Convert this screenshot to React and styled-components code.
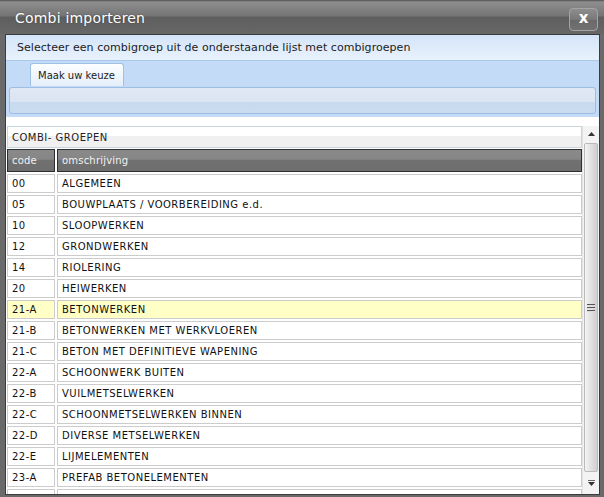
import React from 'react';
import styled, { createGlobalStyle } from 'styled-components';

const GlobalStyle = createGlobalStyle`
    html, body {
        margin: 0;
        padding: 0;
        overflow: hidden;
        background: #6a6a6a;
    }
    body {
        font-family: "DejaVu Sans", Verdana, sans-serif;
        font-size: 10px;
    }
`;

const groups = [
    ['00', 'ALGEMEEN'],
    ['05', 'BOUWPLAATS / VOORBEREIDING e.d.'],
    ['10', 'SLOOPWERKEN'],
    ['12', 'GRONDWERKEN'],
    ['14', 'RIOLERING'],
    ['20', 'HEIWERKEN'],
    ['21-A', 'BETONWERKEN'],
    ['21-B', 'BETONWERKEN MET WERKVLOEREN'],
    ['21-C', 'BETON MET DEFINITIEVE WAPENING'],
    ['22-A', 'SCHOONWERK BUITEN'],
    ['22-B', 'VUILMETSELWERKEN'],
    ['22-C', 'SCHOONMETSELWERKEN BINNEN'],
    ['22-D', 'DIVERSE METSELWERKEN'],
    ['22-E', 'LIJMELEMENTEN'],
    ['23-A', 'PREFAB BETONELEMENTEN'],
    ['24', 'BUITEN TRAPPEN EN HEKKEN']
];

const Window = styled.div`
    width: 604px;
    height: 497px;
    display: flex;
    flex-direction: column;
    background: #6a6a6a;
    overflow: hidden;
`;

const TitleBar = styled.div`
    height: 34px;
    flex-shrink: 0;
    display: flex;
    align-items: center;
    justify-content: space-between;
    padding: 0 6px 0 15px;
    box-sizing: border-box;
    background: linear-gradient(#505050 0, #8e8e8e 2px, #747474 16px, #5e5e5e 17px, #676767 34px);
`;

const Title = styled.span`
    color: #fff;
    font-size: 14px;
    letter-spacing: 0.2px;
    text-shadow: 0 0 2px rgba(0, 0, 0, 0.35);
    margin-top: 1px;
`;

const CloseButton = styled.div`
    width: 29px;
    height: 23px;
    box-sizing: border-box;
    margin-top: 5px;
    border: 1px solid #a4a4a4;
    border-radius: 4px;
    background: linear-gradient(#8e8e8e, #787878 50%, #686868 51%, #727272);
    color: #fff;
    font-weight: bold;
    font-size: 15px;
    line-height: 19px;
    text-align: center;
`;

const Frame = styled.div`
    flex: 1;
    display: flex;
    padding: 0 4px 2px 5px;
    min-height: 0;
`;

const Content = styled.div`
    flex: 1;
    display: flex;
    flex-direction: column;
    border: 1px solid #3c3c3c;
    background: #fff;
    overflow: hidden;
`;

const Intro = styled.div`
    height: 26px;
    flex-shrink: 0;
    box-sizing: border-box;
    padding-left: 11px;
    display: flex;
    align-items: center;
    font-size: 11px;
    letter-spacing: 0.05px;
    color: #1b1b1b;
    background: linear-gradient(#d4e4f8, #e9f2fd);
    border-bottom: 1px solid #a8c8ec;
`;

const TabStrip = styled.div`
    height: 25px;
    flex-shrink: 0;
    box-sizing: border-box;
    padding: 2px 0 0 24px;
    display: flex;
    align-items: flex-end;
    background: #c3dbf7;
`;

const Tab = styled.div`
    height: 23px;
    box-sizing: border-box;
    padding: 0 8px 0 7px;
    display: flex;
    align-items: center;
    color: #1b1b1b;
    border: 1px solid #9fc1e6;
    border-bottom: none;
    border-radius: 3px 3px 0 0;
    background: linear-gradient(#fdfeff, #e4eefa);
`;

const PanelWrap = styled.div`
    flex-shrink: 0;
    padding: 1px 3px 3px 3px;
    background: #c3dbf7;
`;

const Panel = styled.div`
    height: 27px;
    box-sizing: border-box;
    border: 1px solid #9dbde2;
    border-radius: 3px;
    background: linear-gradient(#dfe8f3 0, #dbe5f2 55%, #c7daef 56%, #c9dcf0 100%);
`;

const TableArea = styled.div`
    flex: 1;
    min-height: 0;
    display: flex;
    padding: 9px 0 0 1px;
`;

const List = styled.div`
    flex: 1;
    min-width: 0;
    display: flex;
    flex-direction: column;
    gap: 2px;
    overflow: hidden;
    letter-spacing: 0.5px;
`;

const Caption = styled.div`
    height: 22px;
    flex-shrink: 0;
    box-sizing: border-box;
    padding-left: 4px;
    display: flex;
    align-items: center;
    color: #222;
    border: 1px solid #c6d4de;
    background: linear-gradient(#fff 0, #fff 45%, #f0f0f0 46%);
    margin-bottom: -1px;
`;

const Row = styled.div`
    display: grid;
    grid-template-columns: 48px 1fr;
    column-gap: 2px;
    flex-shrink: 0;
`;

const HeadCell = styled.div`
    height: 23px;
    box-sizing: border-box;
    padding-left: 4px;
    display: flex;
    align-items: center;
    color: #f2f2f2;
    letter-spacing: 0.2px;
    border: 1px solid #2e2e2e;
    background: linear-gradient(#8a8a8a 0, #868686 45%, #717171 46%, #6e6e6e);
`;

const Cell = styled.div`
    height: 19px;
    box-sizing: border-box;
    padding-left: 4px;
    display: flex;
    align-items: center;
    color: #111;
    white-space: nowrap;
    border: 1px solid #cccccc;
    background: ${props => (props.selected ? '#ffffc6' : '#fff')};
`;

const ScrollBar = styled.div`
    width: 16px;
    flex-shrink: 0;
    display: flex;
    flex-direction: column;
    background: #f3f3f3;
    border-left: 1px solid #e2e2e2;
`;

const ArrowButton = styled.div`
    height: ${props => props.h}px;
    flex-shrink: 0;
    display: flex;
    align-items: center;
    justify-content: center;
`;

const Thumb = styled.div`
    flex: 1;
    margin: 0 1px;
    box-sizing: border-box;
    border: 1px solid #bababa;
    border-radius: 2px;
    background: linear-gradient(to right, #f4f4f4, #e4e4e4 40%, #cfcfcf);
    display: flex;
    align-items: center;
    justify-content: center;
`;

const Grip = () => (
    <svg width="8" height="8" viewBox="0 0 8 8">
        <rect x="0" y="0" width="8" height="1" fill="#555" />
        <rect x="0" y="3" width="8" height="1" fill="#555" />
        <rect x="0" y="6" width="8" height="1" fill="#555" />
        <rect x="0" y="1" width="8" height="1" fill="#ddd" />
        <rect x="0" y="4" width="8" height="1" fill="#ddd" />
        <rect x="0" y="7" width="8" height="1" fill="#ddd" />
    </svg>
);

const ArrowUp = () => (
    <svg width="7" height="5" viewBox="0 0 7 5">
        <path d="M3.5 0 L7 4 L0 4 Z" fill="#333" />
    </svg>
);

const ArrowDown = () => (
    <svg width="7" height="6" viewBox="0 0 7 6">
        <rect x="0" y="0" width="7" height="1" fill="#666" />
        <path d="M0 2 L7 2 L3.5 6 Z" fill="#333" />
    </svg>
);

export default function App() {
    return (
        <>
            <GlobalStyle />
            <Window>
                <TitleBar>
                    <Title>Combi importeren</Title>
                    <CloseButton>x</CloseButton>
                </TitleBar>
                <Frame>
                    <Content>
                        <Intro>Selecteer een combigroep uit de onderstaande lijst met combigroepen</Intro>
                        <TabStrip>
                            <Tab>Maak uw keuze</Tab>
                        </TabStrip>
                        <PanelWrap>
                            <Panel />
                        </PanelWrap>
                        <TableArea>
                            <List>
                                <Caption>COMBI- GROEPEN</Caption>
                                <Row>
                                    <HeadCell>code</HeadCell>
                                    <HeadCell>omschrijving</HeadCell>
                                </Row>
                                {groups.map(([code, name]) => (
                                    <Row key={code}>
                                        <Cell selected={code === '21-A'}>{code}</Cell>
                                        <Cell selected={code === '21-A'}>{name}</Cell>
                                    </Row>
                                ))}
                            </List>
                            <ScrollBar>
                                <ArrowButton h={17}><ArrowUp /></ArrowButton>
                                <Thumb><Grip /></Thumb>
                                <ArrowButton h={22}><ArrowDown /></ArrowButton>
                            </ScrollBar>
                        </TableArea>
                    </Content>
                </Frame>
            </Window>
        </>
    );
}
